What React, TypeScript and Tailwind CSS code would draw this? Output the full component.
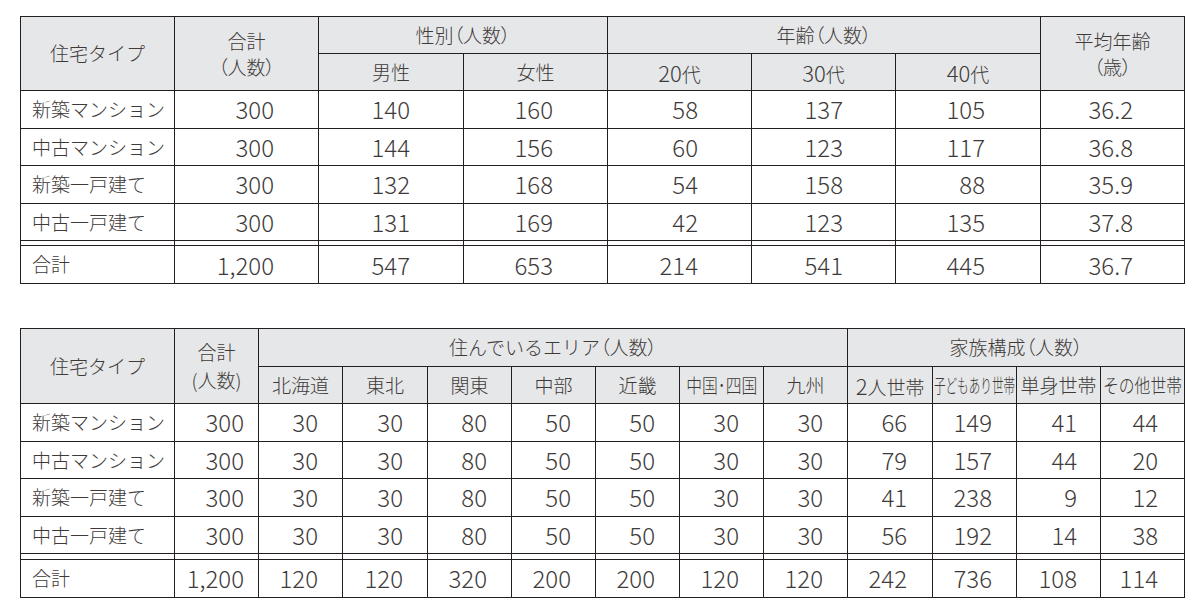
import React from 'react';

interface DataRow {
  label: string;
  total: string;
  values: string[];
}

const ageRows: DataRow[] = [
  { label: '新築マンション', total: '300', values: ['140', '160', '58', '137', '105', '36.2'] },
  { label: '中古マンション', total: '300', values: ['144', '156', '60', '123', '117', '36.8'] },
  { label: '新築一戸建て', total: '300', values: ['132', '168', '54', '158', '88', '35.9'] },
  { label: '中古一戸建て', total: '300', values: ['131', '169', '42', '123', '135', '37.8'] },
];
const ageTotal: DataRow = { label: '合計', total: '1,200', values: ['547', '653', '214', '541', '445', '36.7'] };

const areaRows: DataRow[] = [
  { label: '新築マンション', total: '300', values: ['30', '30', '80', '50', '50', '30', '30', '66', '149', '41', '44'] },
  { label: '中古マンション', total: '300', values: ['30', '30', '80', '50', '50', '30', '30', '79', '157', '44', '20'] },
  { label: '新築一戸建て', total: '300', values: ['30', '30', '80', '50', '50', '30', '30', '41', '238', '9', '12'] },
  { label: '中古一戸建て', total: '300', values: ['30', '30', '80', '50', '50', '30', '30', '56', '192', '14', '38'] },
];
const areaTotal: DataRow = {
  label: '合計',
  total: '1,200',
  values: ['120', '120', '320', '200', '200', '120', '120', '242', '736', '108', '114'],
};

// right padding per value column, numbers are right aligned like the print layout
const agePad = ['pr-[53px]', 'pr-[54px]', 'pr-[53px]', 'pr-[52px]', 'pr-[55px]', 'pr-[51px]'];
const areaPad = [
  'pr-[24px]', 'pr-[24px]', 'pr-[24px]', 'pr-[24px]', 'pr-[24px]', 'pr-[24px]', 'pr-[24px]',
  'pr-[25px]', 'pr-[24px]', 'pr-[23px]', 'pr-[26px]',
];

const cell = 'border border-[#231f20] p-0';
const head = `${cell} bg-[#e6e7e8] text-center font-light`;
const num = `${cell} text-right text-[24px] leading-[24px]`;
const label = `${cell} pl-[11px]`;

const Paren: React.FC<{ children: React.ReactNode }> = ({ children }) => (
  <span className="[font-feature-settings:'palt']">{children}</span>
);

const Digits: React.FC<{ children: React.ReactNode }> = ({ children }) => (
  <span className="text-[22px]">{children}</span>
);

const Squeeze: React.FC<{ scale: string; children: React.ReactNode }> = ({ scale, children }) => (
  <div className="flex justify-center">
    <span className={`inline-block whitespace-nowrap ${scale}`}>{children}</span>
  </div>
);

export default function App() {
  return (
    <div className="bg-white w-[1202px] h-[612px] pl-[20px] pt-[16px] text-[19px] font-light text-[#3e3a39] font-['Noto_Sans_CJK_JP','Noto_Sans',sans-serif]">
      <table className="table-fixed border-collapse w-[1164px]">
        <colgroup>
          <col className="w-[154px]" />
          <col className="w-[144px]" />
          <col className="w-[145px]" />
          <col className="w-[144px]" />
          <col className="w-[144px]" />
          <col className="w-[144px]" />
          <col className="w-[145px]" />
          <col className="w-[144px]" />
        </colgroup>
        <thead>
          <tr className="h-[37px]">
            <th rowSpan={2} className={head}>住宅タイプ</th>
            <th rowSpan={2} className={`${head} leading-[26px]`}>
              合計
              <br />
              <Paren>（人数）</Paren>
            </th>
            <th colSpan={2} className={head}>
              性別<Paren>（人数）</Paren>
            </th>
            <th colSpan={3} className={head}>
              年齢<Paren>（人数）</Paren>
            </th>
            <th rowSpan={2} className={`${head} leading-[26px]`}>
              平均年齢
              <br />
              <Paren>（歳）</Paren>
            </th>
          </tr>
          <tr className="h-[37px]">
            <th className={head}>男性</th>
            <th className={head}>女性</th>
            <th className={head}><Digits>20</Digits>代</th>
            <th className={head}><Digits>30</Digits>代</th>
            <th className={head}><Digits>40</Digits>代</th>
          </tr>
        </thead>
        <tbody>
          {ageRows.map((row) => (
            <tr key={row.label} className="h-[37.5px]">
              <td className={label}>{row.label}</td>
              <td className={`${num} pr-[44px]`}>{row.total}</td>
              {row.values.map((v, i) => (
                <td key={i} className={`${num} ${agePad[i]}`}>{v}</td>
              ))}
            </tr>
          ))}
          <tr className="h-[5px]">
            {Array.from({ length: 8 }).map((_, i) => (
              <td key={i} className={cell} />
            ))}
          </tr>
          <tr className="h-[38px]">
            <td className={label}>{ageTotal.label}</td>
            <td className={`${num} pr-[44px]`}>{ageTotal.total}</td>
            {ageTotal.values.map((v, i) => (
              <td key={i} className={`${num} ${agePad[i]}`}>{v}</td>
            ))}
          </tr>
        </tbody>
      </table>

      <table className="table-fixed border-collapse w-[1164px] mt-[44px]">
        <colgroup>
          <col className="w-[154px]" />
          <col className="w-[84px]" />
          <col className="w-[84px]" />
          <col className="w-[85px]" />
          <col className="w-[84px]" />
          <col className="w-[84px]" />
          <col className="w-[84px]" />
          <col className="w-[84px]" />
          <col className="w-[84px]" />
          <col className="w-[85px]" />
          <col className="w-[84px]" />
          <col className="w-[84px]" />
          <col className="w-[84px]" />
        </colgroup>
        <thead>
          <tr className="h-[38px]">
            <th rowSpan={2} className={head}>住宅タイプ</th>
            <th rowSpan={2} className={`${head} leading-[28px]`}>
              合計
              <br />
              (人数)
            </th>
            <th colSpan={7} className={head}>
              住んでいるエリア<Paren>（人数）</Paren>
            </th>
            <th colSpan={4} className={head}>
              家族構成<Paren>（人数）</Paren>
            </th>
          </tr>
          <tr className="h-[37px]">
            <th className={head}>北海道</th>
            <th className={head}>東北</th>
            <th className={head}>関東</th>
            <th className={head}>中部</th>
            <th className={head}>近畿</th>
            <th className={head}>
              <Squeeze scale="scale-x-[0.83]">中国･四国</Squeeze>
            </th>
            <th className={head}>九州</th>
            <th className={head}><Digits>2</Digits>人世帯</th>
            <th className={head}>
              <Squeeze scale="scale-x-[0.61]">子どもあり世帯</Squeeze>
            </th>
            <th className={head}>単身世帯</th>
            <th className={head}>
              <Squeeze scale="scale-x-[0.83]">その他世帯</Squeeze>
            </th>
          </tr>
        </thead>
        <tbody>
          {areaRows.map((row) => (
            <tr key={row.label} className="h-[37.5px]">
              <td className={label}>{row.label}</td>
              <td className={`${num} pr-[14px]`}>{row.total}</td>
              {row.values.map((v, i) => (
                <td key={i} className={`${num} ${areaPad[i]}`}>{v}</td>
              ))}
            </tr>
          ))}
          <tr className="h-[5.5px]">
            {Array.from({ length: 13 }).map((_, i) => (
              <td key={i} className={cell} />
            ))}
          </tr>
          <tr className="h-[38px]">
            <td className={label}>{areaTotal.label}</td>
            <td className={`${num} pr-[14px]`}>{areaTotal.total}</td>
            {areaTotal.values.map((v, i) => (
              <td key={i} className={`${num} ${areaPad[i]}`}>{v}</td>
            ))}
          </tr>
        </tbody>
      </table>
    </div>
  );
}
